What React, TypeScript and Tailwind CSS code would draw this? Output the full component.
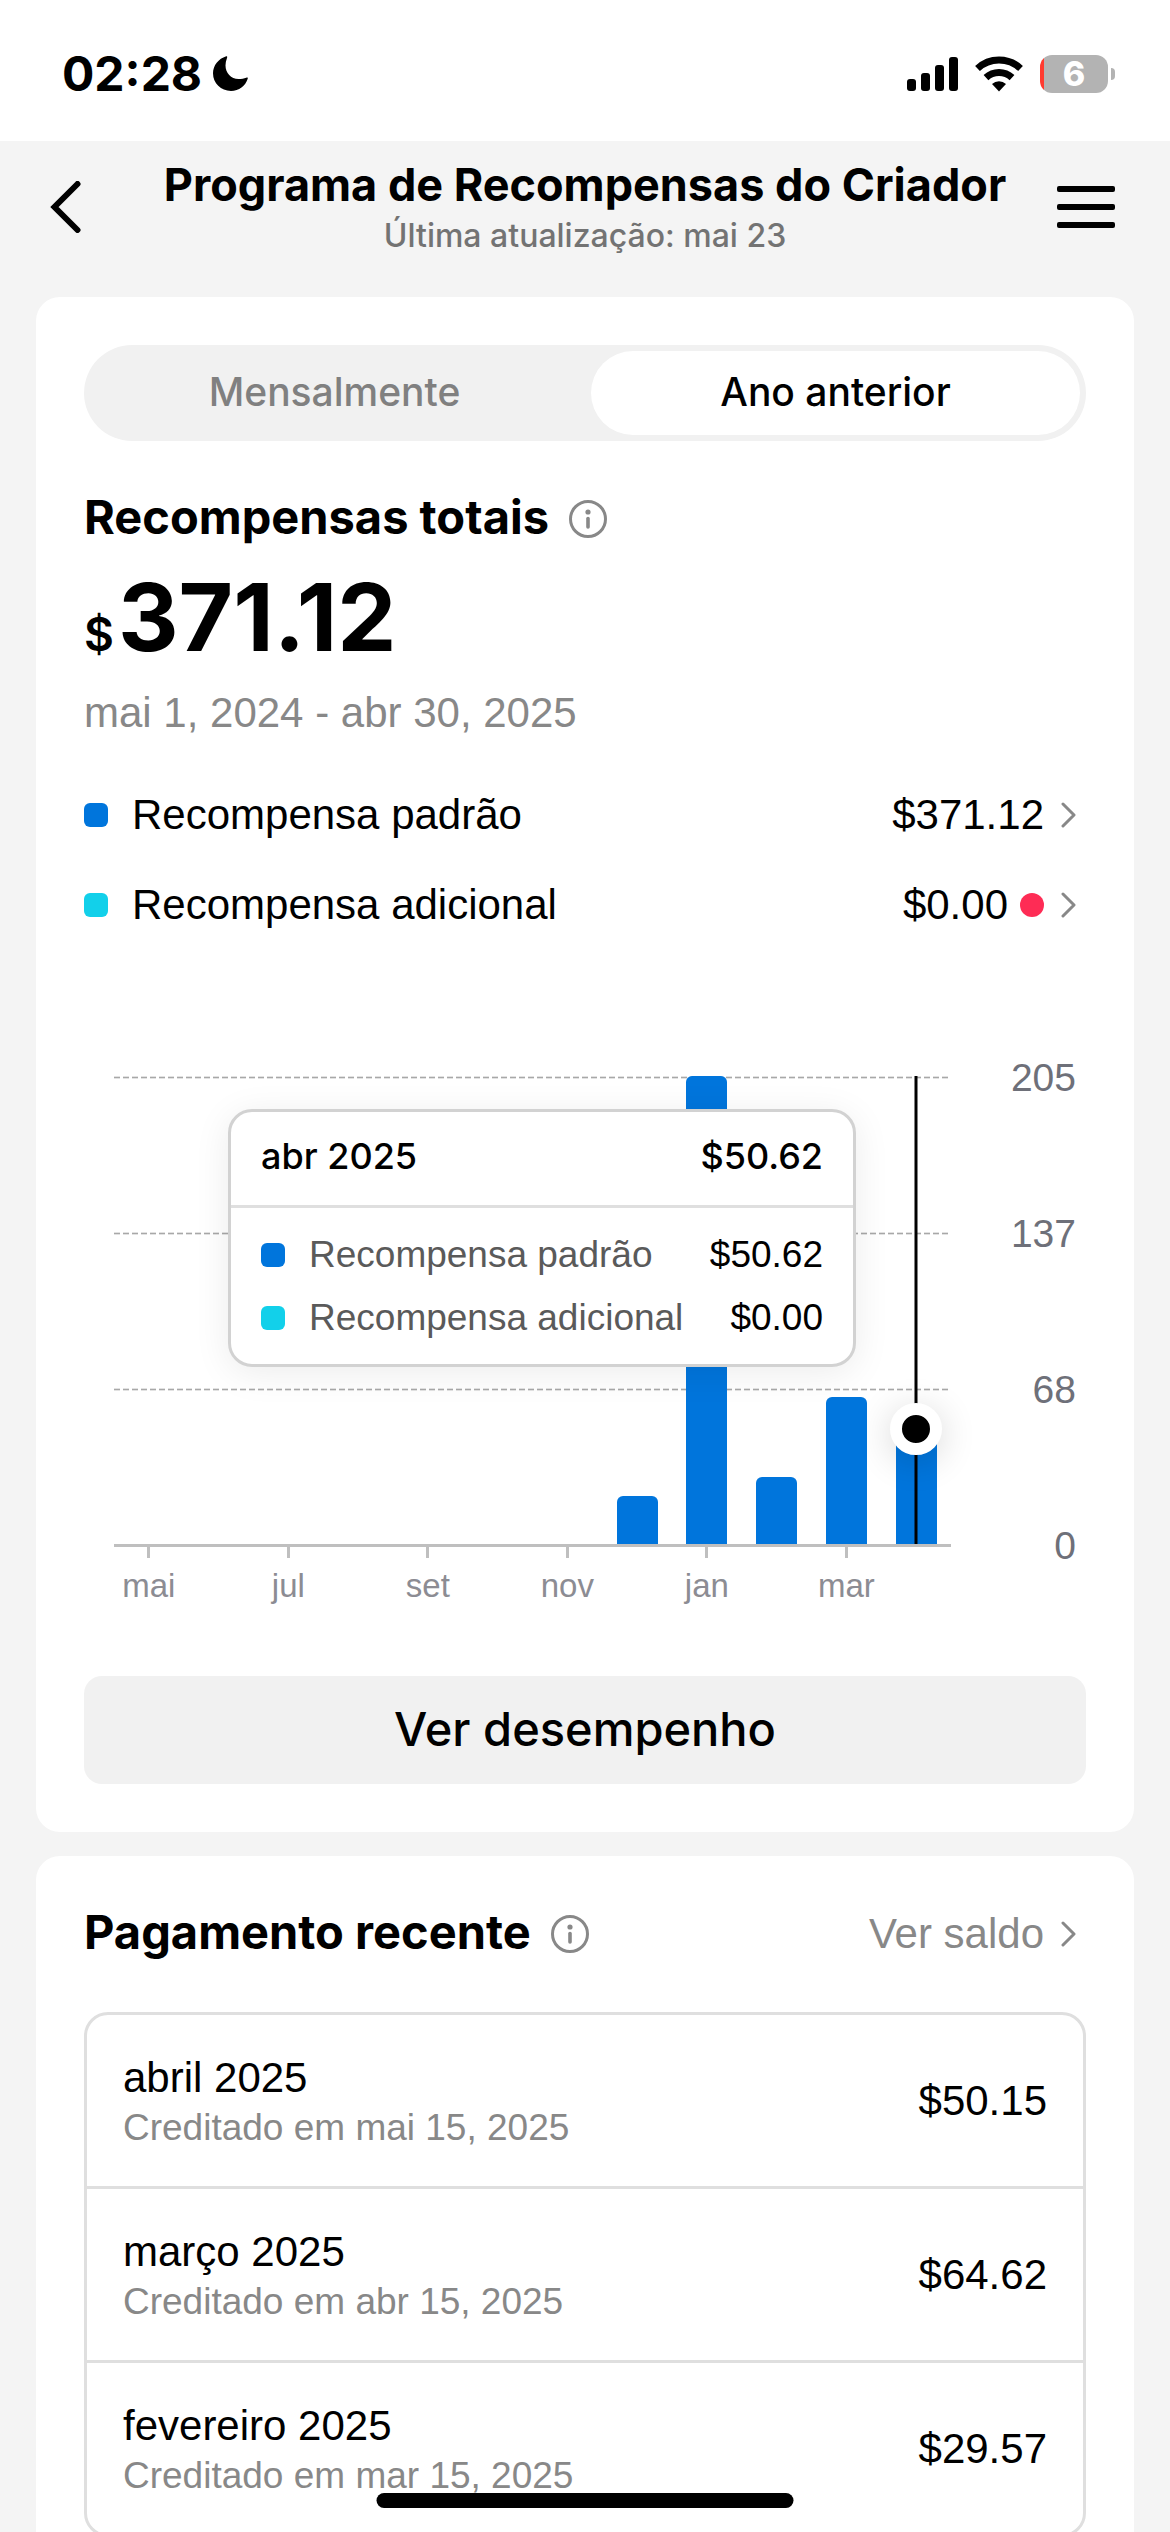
import React from "react";

const HEAD = "font-['Inter',sans-serif]";

const MONTHS = [
  { label: "mai", value: 0 },
  { label: "", value: 0 },
  { label: "jul", value: 0 },
  { label: "", value: 0 },
  { label: "set", value: 0 },
  { label: "", value: 0 },
  { label: "nov", value: 0 },
  { label: "", value: 21.01 },
  { label: "jan", value: 205.3 },
  { label: "", value: 29.57 },
  { label: "mar", value: 64.62 },
  { label: "", value: 50.62 },
];
const MAX = 205.3;
const SELECTED = 11;

const PAYMENTS = [
  { month: "abril 2025", credited: "Creditado em mai 15, 2025", amount: "$50.15" },
  { month: "março 2025", credited: "Creditado em abr 15, 2025", amount: "$64.62" },
  { month: "fevereiro 2025", credited: "Creditado em mar 15, 2025", amount: "$29.57" },
];

function Chevron() {
  return (
    <svg width="15" height="26" viewBox="0 0 15 26" fill="none" stroke="#888888" strokeWidth="3" strokeLinecap="round" strokeLinejoin="round" aria-hidden="true">
      <path d="M2 2l11 11L2 24" />
    </svg>
  );
}

function InfoIcon() {
  return (
    <svg width="38" height="38" viewBox="0 0 38 38" fill="none" aria-hidden="true">
      <circle cx="19" cy="19" r="17.5" stroke="#888888" strokeWidth="3" />
      <circle cx="19" cy="12" r="2.6" fill="#888888" />
      <path d="M19 18.5v8.5" stroke="#888888" strokeWidth="3.6" strokeLinecap="round" />
    </svg>
  );
}

function GridLine() {
  return (
    <div className="h-[3px] bg-[linear-gradient(#e2e2e2_1px,#a8a8a8_1px,#a8a8a8_2px,#e2e2e2_2px)] [mask-image:repeating-linear-gradient(to_right,#000_0_6px,transparent_6px_9px)]" />
  );
}

function StatusBar() {
  return (
    <div className="flex h-[141px] shrink-0 items-center justify-between bg-white pt-1.5 pr-[55px] pl-[62px]">
      <div className="flex items-center gap-[11px]">
        <span className={`${HEAD} text-[48px] leading-[48px] font-bold`}>02:28</span>
        <svg width="35" height="35" viewBox="0 0 35 35" aria-hidden="true">
          <path d="M13.2.3c1.1-.3 1.2.5.8 1.7-1 2.5-1.5 5-1.5 7.5C12.500 17 18 23 25.500 23c3 0 5.500-.4 7.700-1.300 1.300-.5 1.800-.1 1.500 1.100C32.500 30 26 35 18 35 8 35 0 27.300 0 17.300 0 9.500 5.500 2.800 13.200.3z" />
        </svg>
      </div>
      <div className="flex items-center gap-[17px]">
        <svg width="51" height="36" viewBox="0 0 51 36" aria-hidden="true">
          <rect x="0" y="23" width="9" height="12" rx="3" />
          <rect x="14" y="17" width="9" height="18" rx="3" />
          <rect x="28" y="9" width="9" height="26" rx="3" />
          <rect x="42" y="1" width="9" height="34" rx="3" />
        </svg>
        <svg width="48" height="36" viewBox="0 0 48 36" fill="none" stroke="black" strokeWidth="7" aria-hidden="true">
          <path d="M2.500 12.500A31.500 31.500 0 0 1 45.500 12.500" />
          <path d="M11 21.600A19 19 0 0 1 37 21.600" />
          <path d="M24 35.500L17 28A10.500 10.500 0 0 1 31 28Z" fill="black" stroke="none" />
        </svg>
        <div className="flex items-center gap-[3px]">
          <div className={`${HEAD} flex h-[38px] w-[68px] items-center justify-center rounded-[12px] bg-[linear-gradient(to_right,#ff3b30_4px,#b3b3b3_4px)] text-[34px] leading-[38px] font-extrabold text-white`}>6</div>
          <div className="h-[12px] w-[4px] rounded-r-full bg-[#b3b3b3]" />
        </div>
      </div>
    </div>
  );
}

function Header() {
  return (
    <header className="grid h-[156px] shrink-0 grid-cols-[1fr_auto_1fr] px-12 pt-[17px]">
      <button type="button" aria-label="Voltar" className="mt-[23px] h-[52px] justify-self-start">
        <svg width="36" height="52" viewBox="0 0 36 52" fill="none" stroke="black" strokeWidth="6" strokeLinecap="round" strokeLinejoin="miter" aria-hidden="true">
          <path d="M29.500 3L6.500 26l23 23" />
        </svg>
      </button>
      <div className={`${HEAD} text-center`}>
        <h1 className="text-[45px] leading-[54px] font-bold">Programa de Recompensas do Criador</h1>
        <p className="mt-1 text-[32px] leading-[40px] font-medium text-[#737373]">Última atualização: mai 23</p>
      </div>
      <button type="button" aria-label="Menu" className="mt-[23px] h-[52px] justify-self-end">
        <svg width="72" height="52" viewBox="0 0 72 52" aria-hidden="true">
          <rect x="7" y="5" width="58" height="6" rx="2" />
          <rect x="7" y="23" width="58" height="6" rx="2" />
          <rect x="7" y="41" width="58" height="6" rx="2" />
        </svg>
      </button>
    </header>
  );
}

function Chart() {
  return (
    <div className="mt-[147px] mr-[10px] ml-[30px]">
      <div className="flex">
        <div className="relative h-[468px] flex-1">
          <div className="absolute inset-x-0 top-0 -bottom-[3px] flex flex-col justify-between">
            <GridLine />
            <GridLine />
            <GridLine />
            <div className="h-[3px]" />
          </div>
          <div className="relative flex h-full">
            {MONTHS.map((m, i) => (
              <div key={i} className="relative flex h-full flex-1 items-end justify-center">
                {m.value > 0 && <div className="w-[41px] rounded-t-[6px] bg-[#0075dc]" style={{ height: `${(m.value / MAX) * 100}%` }} />}
                {i === SELECTED && (
                  <>
                    <div className="absolute inset-y-0 left-1/2 w-[3px] -translate-x-1/2 bg-black" />
                    <div
                      className="absolute left-1/2 h-[52px] w-[52px] -translate-x-1/2 translate-y-1/2 rounded-full border-[12px] border-white bg-black shadow-[0_6px_36px_rgba(0,0,0,0.16)]"
                      style={{ bottom: `${(m.value / MAX) * 100}%` }}
                    />
                  </>
                )}
              </div>
            ))}
          </div>
          <div className="absolute top-[33px] right-[95px] w-[628px] rounded-[24px] border-[3px] border-[#d2d2d2] bg-white shadow-[0_6px_36px_rgba(0,0,0,0.08)]">
            <div className={`${HEAD} flex justify-between border-b-[3px] border-[#dfdfdf] px-[30px] pt-5 pb-[25px] text-[36px] leading-[48px] font-medium`}>
              <span>abr 2025</span>
              <span>$50.62</span>
            </div>
            <div className="flex flex-col gap-[21px] px-[30px] pt-[26px] pb-[25px] text-[37px] leading-[42px]">
              <div className="flex items-center">
                <span className="h-6 w-6 rounded-[6px] bg-[#0075dc]" />
                <span className="ml-6 flex-1 text-[#5a5a5a]">Recompensa padrão</span>
                <span>$50.62</span>
              </div>
              <div className="flex items-center">
                <span className="h-6 w-6 rounded-[6px] bg-[#12d0ea]" />
                <span className="ml-6 flex-1 text-[#5a5a5a]">Recompensa adicional</span>
                <span>$0.00</span>
              </div>
            </div>
          </div>
        </div>
        <div className="-mt-[18px] -mb-[22px] flex w-[125px] flex-col justify-between text-right text-[39px] leading-[40px] text-[#6e7079]">
          <span>205</span>
          <span>137</span>
          <span>68</span>
          <span>0</span>
        </div>
      </div>
      <div className="mr-[125px] flex border-t-[3px] border-[#bfbfbf] text-[33px] leading-[40px] text-[#8c8c93]">
        {MONTHS.map((m, i) => (
          <div key={i} className="flex h-[59px] w-0 flex-1 flex-col items-center">
            {m.label && (
              <>
                <span className="h-3 w-[3px] bg-[#bfbfbf]" />
                <span className="mt-2">{m.label}</span>
              </>
            )}
          </div>
        ))}
      </div>
    </div>
  );
}

export default function App() {
  return (
    <div className="relative flex h-screen flex-col overflow-hidden bg-[#f4f4f4] font-['Liberation_Sans',Arial,sans-serif] text-black">
      <StatusBar />
      <Header />
      <main className="min-h-0 flex-1 overflow-y-auto px-9 [scrollbar-width:none]">
        <section className="rounded-[24px] bg-white p-12">
          <div role="tablist" className={`${HEAD} grid h-24 grid-cols-2 gap-3 rounded-full bg-[#f1f1f1] p-1.5 text-[39px] font-medium`}>
            <button type="button" role="tab" aria-selected="false" className="rounded-full pb-0.5 text-[#808080]">Mensalmente</button>
            <button type="button" role="tab" aria-selected="true" className="rounded-full bg-white pb-0.5">Ano anterior</button>
          </div>

          <div className="mt-12 flex items-center gap-5">
            <h2 className={`${HEAD} text-[47px] leading-[56px] font-bold`}>Recompensas totais</h2>
            <button type="button" aria-label="Sobre as recompensas totais" className="pt-1"><InfoIcon /></button>
          </div>
          <p className={`${HEAD} mt-6 flex items-baseline gap-1 font-bold`}>
            <span className="text-[46px] leading-[48px] font-semibold">$</span>
            <span className="text-[94px] leading-[96px]">371.12</span>
          </p>
          <p className="mt-6 text-[42px] leading-[48px] text-[#888888]">mai 1, 2024 - abr 30, 2025</p>

          <a href="#padrao" className="mt-[54px] flex items-center pr-[10px] text-[42px] leading-[48px]">
            <span className="h-6 w-6 rounded-[6px] bg-[#0075dc]" />
            <span className="ml-6 flex-1">Recompensa padrão</span>
            <span className="mr-[17px]">$371.12</span>
            <Chevron />
          </a>
          <a href="#adicional" className="mt-[42px] flex items-center pr-[10px] text-[42px] leading-[48px]">
            <span className="h-6 w-6 rounded-[6px] bg-[#12d0ea]" />
            <span className="ml-6 flex-1">Recompensa adicional</span>
            <span>$0.00</span>
            <span className="mr-[17px] ml-3 h-6 w-6 rounded-full bg-[#fe2c55]" />
            <Chevron />
          </a>

          <Chart />

          <button type="button" className={`${HEAD} mt-[70px] h-[108px] w-full rounded-[18px] bg-[#f1f1f1] pb-0.5 text-[47px] font-medium`}>Ver desempenho</button>
        </section>

        <section className="mt-6 rounded-t-[24px] bg-white px-12 pt-12 pb-24">
          <div className="flex items-center justify-between">
            <div className="flex items-center gap-5">
              <h2 className={`${HEAD} text-[47px] leading-[56px] font-bold`}>Pagamento recente</h2>
              <button type="button" aria-label="Sobre o pagamento recente" className="pt-1"><InfoIcon /></button>
            </div>
            <a href="#saldo" className="flex items-center gap-[17px] pt-1 pr-[10px] text-[42px] leading-[52px] text-[#888888]">
              Ver saldo
              <Chevron />
            </a>
          </div>
          <ul className="mt-[52px] divide-y-[3px] divide-[#dfdfdf] rounded-[24px] border-[3px] border-[#dfdfdf]">
            {PAYMENTS.map((p) => (
              <li key={p.month} className="flex items-center justify-between px-9 pt-9 pb-[35px]">
                <div>
                  <p className="text-[42px] leading-[54px]">{p.month}</p>
                  <p className="text-[37px] leading-[46px] text-[#888888]">{p.credited}</p>
                </div>
                <span className="text-[42px] leading-[54px]">{p.amount}</span>
              </li>
            ))}
          </ul>
        </section>
      </main>
      <div className="absolute bottom-6 left-1/2 h-[15px] w-[417px] -translate-x-1/2 rounded-full bg-black" />
    </div>
  );
}
